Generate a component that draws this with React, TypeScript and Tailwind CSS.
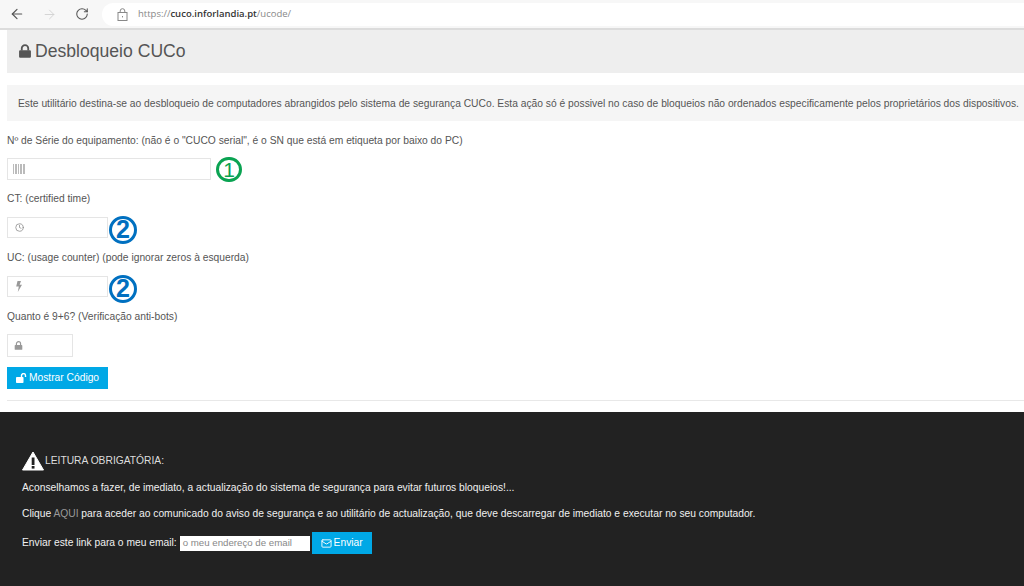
import { ArrowLeft, ArrowRight, RotateCw, Clock, Mail } from "lucide-react"

const Fa = "font-['Liberation_Sans',Arial,sans-serif]"

const Badge = ({ n, green }: { n: string; green?: boolean }) => (
  <span
    className={
      green
        ? "ml-[5px] flex h-[25px] w-[26px] items-center justify-center rounded-full border-[3px] border-[#0aa352] text-[21px] leading-none text-[#0aa352]"
        : "ml-[1px] mt-[4px] flex h-[28px] w-[28px] items-center justify-center rounded-full border-[3px] border-[#0070c0] text-[25px] font-bold leading-none text-[#0070c0]"
    }
  >
    {n}
  </span>
)

const LockSolid = ({ size, color }: { size: number; color: string }) => (
  <svg width={size} height={size} viewBox="0 0 12 13">
    <path d="M3 6V4a3 3 0 0 1 6 0v2" fill="none" stroke={color} strokeWidth="1.7" />
    <rect x="0.5" y="5.8" width="11" height="7" rx="1" fill={color} />
  </svg>
)

const App = () => {
  return (
    <div className={`${Fa} flex h-[586px] w-[1024px] flex-col overflow-hidden bg-white text-[#555]`}>
      {/* Browser bar */}
      <div className="flex h-[30px] shrink-0 items-center border-b-2 border-[#dcdcdc] bg-[#f7f7f7] pl-[9px]">
        <ArrowLeft size={16} strokeWidth={1.8} className="text-[#555]" />
        <ArrowRight size={15} strokeWidth={1.4} className="ml-[17px] text-[#d0d0d0]" />
        <RotateCw size={14} strokeWidth={1.8} className="ml-[18px] text-[#555]" />
        <div className="ml-[13px] flex h-[23px] flex-1 items-center rounded-l-full bg-white pl-[15px]">
          <svg width="11" height="13" viewBox="0 0 11 13" fill="none" stroke="#888" strokeWidth="1">
            <path d="M3.2 4.5V3a2.3 2.3 0 0 1 4.6 0v1.5" />
            <rect x="1" y="4.5" width="9" height="8" />
            <rect x="5" y="8" width="1" height="1.4" fill="#888" stroke="none" />
          </svg>
          <span className="ml-[10px] font-['Open_Sans',sans-serif] text-[9.5px] text-[#888]">
            https://<span className="font-semibold text-[#333]">cuco.inforlandia.pt</span>/ucode/
          </span>
        </div>
      </div>

      {/* Title */}
      <div className="ml-[7px] flex h-[43px] shrink-0 items-center bg-[#eee] pl-[11px] pt-[1px]">
        <div className="mb-[3px]">
          <LockSolid size={14} color="#555" />
        </div>
        <h1 className="ml-[3px] text-[17.6px] leading-none text-[#555]">Desbloqueio CUCo</h1>
      </div>

      {/* Notice */}
      <div className="ml-[7px] mt-[12px] flex h-[36px] shrink-0 items-center bg-[#f5f5f5] pl-[11px] pt-[1px] text-[10.28px] whitespace-nowrap">
        Este utilitário destina-se ao desbloqueio de computadores abrangidos pelo sistema de segurança CUCo. Esta ação só é possivel no caso de bloqueios não ordenados especificamente pelos proprietários dos dispositivos.
      </div>

      {/* Form */}
      <div className="flex flex-col pl-[7px] text-[10.28px]">
        <p className="mt-[14px] h-[12px] leading-[12px]">Nº de Série do equipamento: (não é o "CUCO serial", é o SN que está em etiqueta por baixo do PC)</p>
        <div className="mt-[11px] flex h-[22px] items-center">
          <div className="flex h-[22px] w-[204px] items-center border border-[#e5e5e5] pl-[5px]">
            <svg width="12" height="10" viewBox="0 0 12 10" fill="#bbb">
              <rect x="0" width="1" height="10" />
              <rect x="2" width="2" height="10" />
              <rect x="5" width="1" height="10" />
              <rect x="7" width="2" height="10" />
              <rect x="10" width="2" height="10" />
            </svg>
          </div>
          <Badge n="1" green />
        </div>

        <p className="mt-[13px] h-[12px] leading-[12px]">CT: (certified time)</p>
        <div className="mt-[12px] flex h-[21px] items-center">
          <div className="flex h-[21px] w-[101px] items-center border border-[#e5e5e5] pl-[7px]">
            <Clock size={9} className="text-[#888]" />
          </div>
          <Badge n="2" />
        </div>

        <p className="mt-[14px] h-[12px] leading-[12px]">UC: (usage counter) (pode ignorar zeros à esquerda)</p>
        <div className="mt-[12px] flex h-[21px] items-center">
          <div className="flex h-[21px] w-[101px] items-center border border-[#e5e5e5] pl-[8px]">
            <svg width="6" height="11" viewBox="0 0 6 11" fill="#999">
              <path d="M1.5 0H5L3.6 3.8H6L1.8 11L2.8 5.6H0.2Z" />
            </svg>
          </div>
          <Badge n="2" />
        </div>

        <p className="mt-[14px] h-[12px] leading-[12px]">Quanto é 9+6? (Verificação anti-bots)</p>
        <div className="mt-[11px] flex h-[23px] w-[66px] items-center border border-[#e5e5e5] pl-[6px]">
          <LockSolid size={9} color="#999" />
        </div>
        <button className="mt-[10px] flex h-[22px] w-[101px] items-center justify-center bg-[#00a8e6] text-[10.28px] text-white">
          <svg width="11" height="10" viewBox="0 0 11 10" fill="white" className="mr-[2px]">
            <rect x="0" y="4" width="7.5" height="6" rx="0.8" />
            <path d="M5.5 4.5V2.6a2 2 0 0 1 4 0V4" fill="none" stroke="white" strokeWidth="1.4" />
          </svg>
          Mostrar Código
        </button>
      </div>

      <hr className="ml-[7px] mt-[11px] border-t border-[#e8e8e8]" />

      {/* Footer */}
      <div className="mt-[11px] flex flex-1 flex-col bg-[#222] pl-[22px] pt-[39px] text-[10.28px] text-[#f0f0f0]">
        <div className="flex h-[20px] items-center">
          <svg width="22" height="20" viewBox="0 0 22 20">
            <path d="M11 1 L21.5 19 H0.5 Z" fill="#fff" stroke="#fff" strokeLinejoin="round" />
            <rect x="9.7" y="6.5" width="2.8" height="7.5" fill="#222" />
            <rect x="9.7" y="15" width="2.8" height="2.6" fill="#222" />
          </svg>
          <span className="ml-[1px] text-[#ddd]">LEITURA OBRIGATÓRIA:</span>
        </div>
        <p className="mt-[11px] h-[12px] leading-[12px]">Aconselhamos a fazer, de imediato, a actualização do sistema de segurança para evitar futuros bloqueios!...</p>
        <p className="mt-[14px] h-[12px] leading-[12px]">
          Clique <span className="text-[#999]">AQUI</span> para aceder ao comunicado do aviso de segurança e ao utilitário de actualização, que deve descarregar de imediato e executar no seu computador.
        </p>
        <div className="mt-[12px] flex items-center">
          <span>Enviar este link para o meu email:</span>
          <div className="ml-[3px] flex h-[15px] w-[130px] items-center bg-white pl-[3px] text-[9.7px] text-[#888]">o meu endereço de email</div>
          <button className="ml-[2px] flex h-[22px] w-[60px] items-center justify-center bg-[#00a8e6] text-white">
            <Mail size={11} className="mr-[2px]" />
            Enviar
          </button>
        </div>
      </div>
    </div>
  )
}

export default App
